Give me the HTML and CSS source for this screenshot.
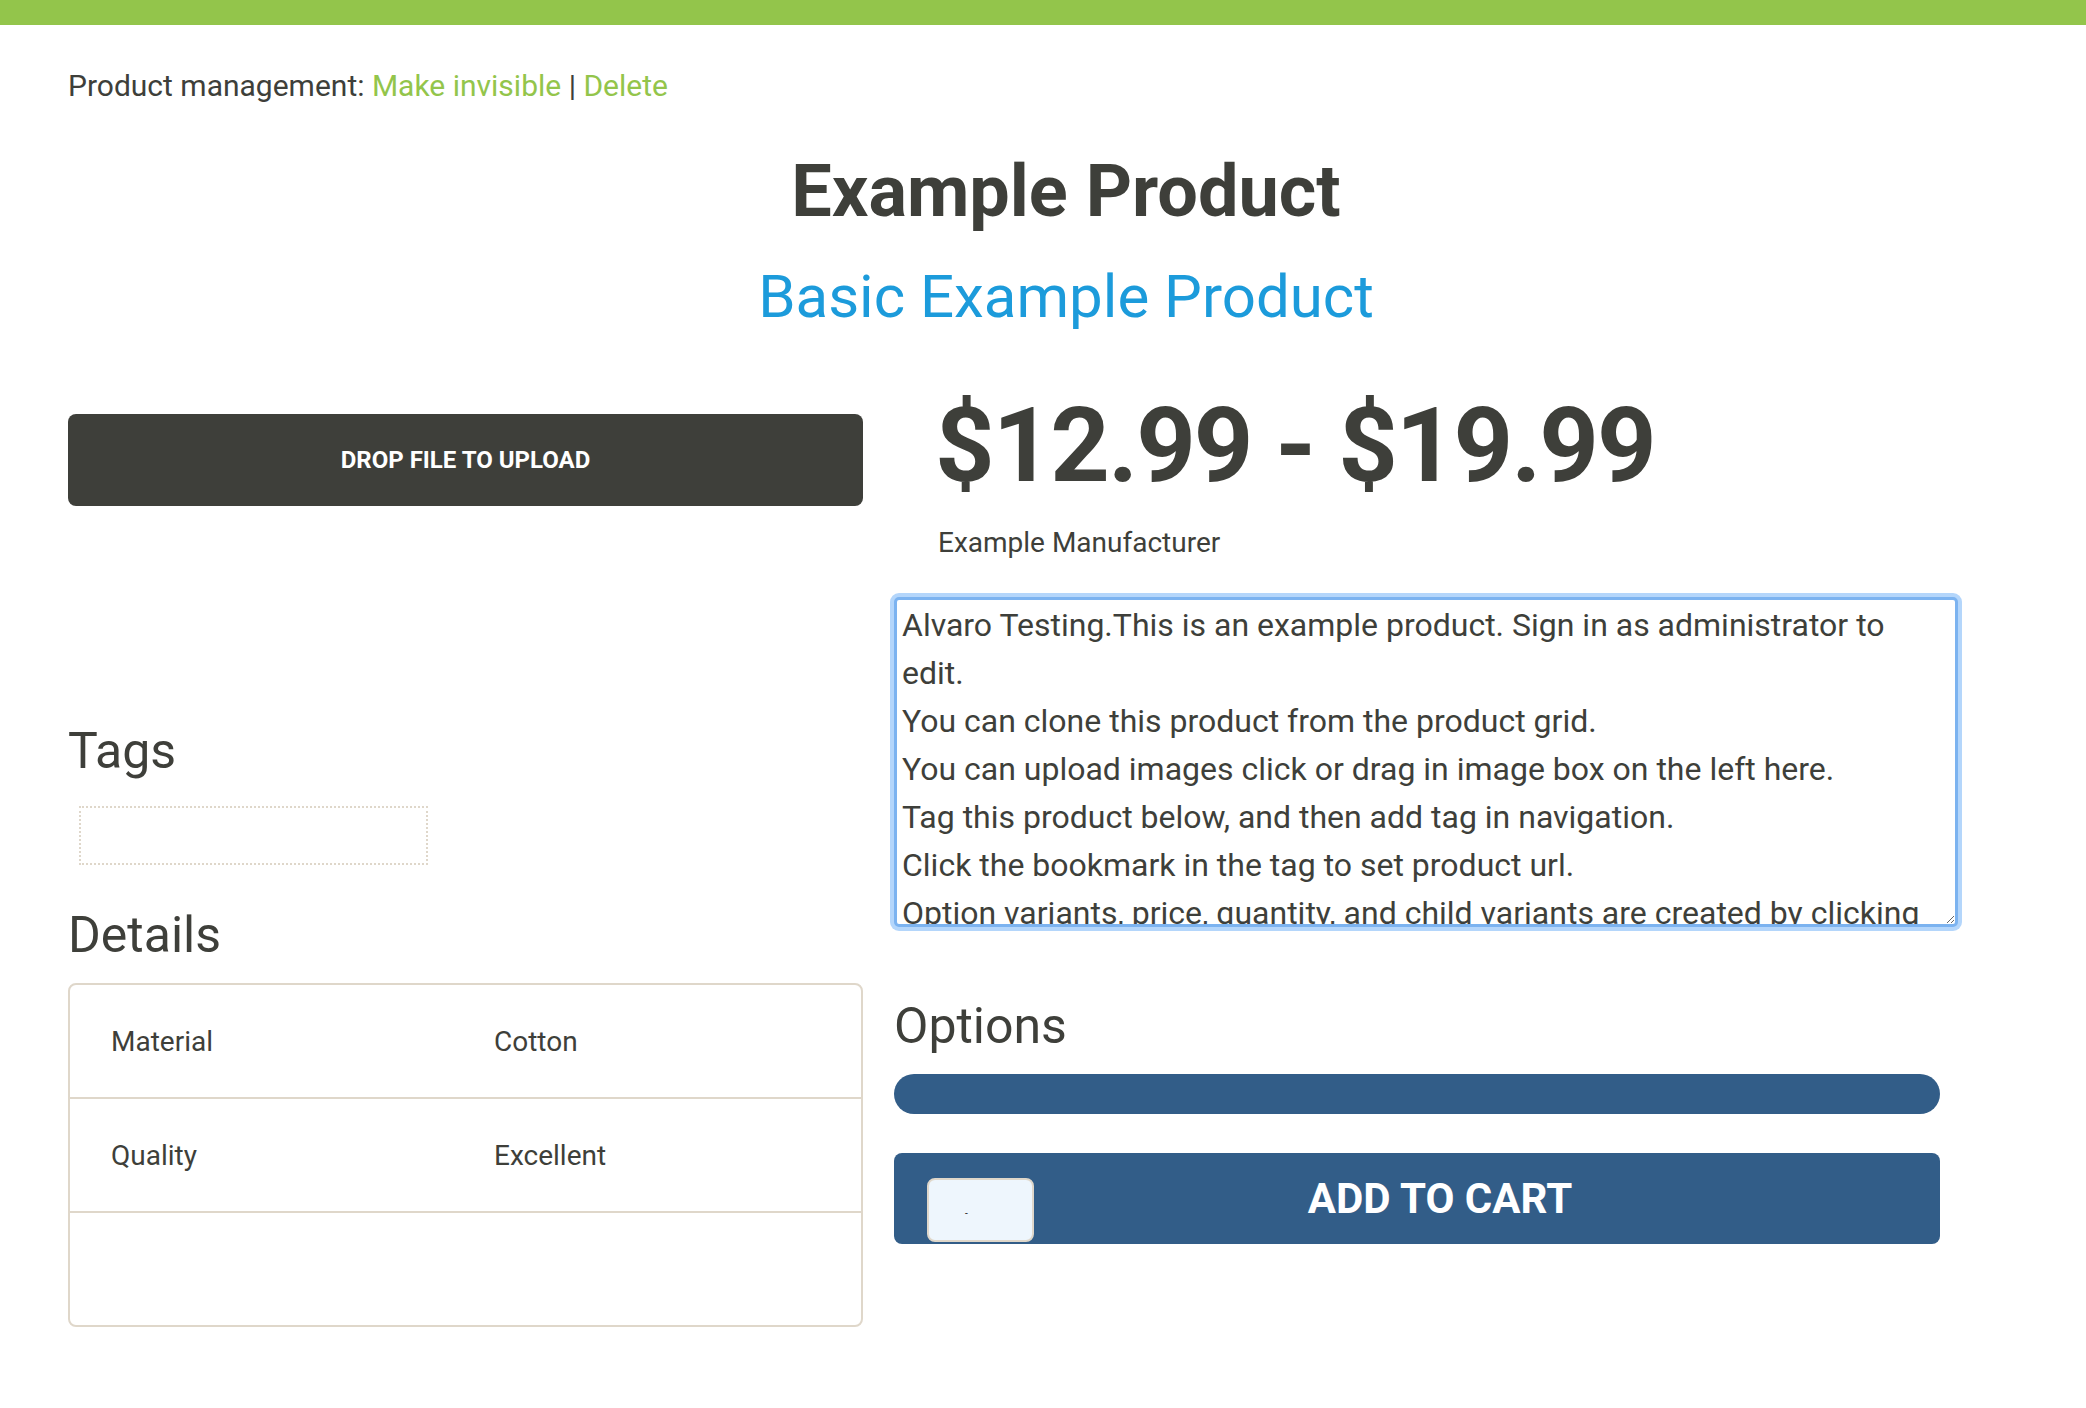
FILE: index.html
```html
<!DOCTYPE html>
<html lang="en">
<head>
<meta charset="utf-8">
<title>Example Product</title>
<link rel="stylesheet" href="styles.css">
</head>
<body>
<div class="topbar"></div>
<div class="page">
  <p class="mgmt">Product management: <a href="#" class="link">Make invisible</a> | <a href="#" class="link">Delete</a></p>
  <h1 class="title">Example Product</h1>
  <h2 class="subtitle">Basic Example Product</h2>
  <div class="row">
    <div class="col-left">
      <div class="drop">DROP FILE TO UPLOAD</div>
      <h3 class="section tags-h">Tags</h3>
      <div class="tagbox"></div>
      <h3 class="section details-h">Details</h3>
      <div class="details">
        <div class="drow"><span class="dcell">Material</span><span class="dcell">Cotton</span></div>
        <div class="drow"><span class="dcell">Quality</span><span class="dcell">Excellent</span></div>
        <div class="drow drow-last"></div>
      </div>
    </div>
    <div class="col-right">
      <div class="price">$12.99 - $19.99</div>
      <div class="mfr">Example Manufacturer</div>
      <textarea class="desc">Alvaro Testing.This is an example product. Sign in as administrator to edit.
You can clone this product from the product grid.
You can upload images click or drag in image box on the left here.
Tag this product below, and then add tag in navigation.
Click the bookmark in the tag to set product url.
Option variants, price, quantity, and child variants are created by clicking on the options tab.</textarea>
      <h3 class="section options-h">Options</h3>
      <div class="optbar"></div>
      <div class="cart">
        <span class="qty"><span class="qty-mark">-</span></span>
        <span class="cart-label">ADD TO CART</span>
      </div>
    </div>
  </div>
</div>
</body>
</html>
```

FILE: styles.css
```css
html, body {
  margin: 0;
  padding: 0;
  background: #ffffff;
}

body {
  font-family: "Roboto", "Liberation Sans", sans-serif;
  color: #3e3f3a;
}

.topbar {
  height: 25px;
  background: #93c54b;
}

.page {
  padding: 0 22px 0 68px;
}

.mgmt {
  margin: 41px 0 0;
  font-size: 30px;
  line-height: 40px;
}

.link {
  color: #93c54b;
  text-decoration: none;
}

.title {
  margin: 46px 0 0;
  text-align: center;
  font-size: 72px;
  line-height: 80px;
  font-weight: 700;
  color: #3e3f3a;
}

.subtitle {
  margin: 32px 0 0;
  text-align: center;
  font-size: 60px;
  line-height: 66px;
  font-weight: 400;
  color: #1c9bdb;
}

.row {
  display: flex;
  gap: 31px;
  align-items: flex-start;
}

.col-left {
  width: 795px;
  flex: none;
  display: flex;
  flex-direction: column;
}

.col-right {
  flex: 1;
  display: flex;
  flex-direction: column;
}

.drop {
  margin-top: 84px;
  height: 92px;
  line-height: 92px;
  background: #3e3f3a;
  border-radius: 8px;
  color: #ffffff;
  text-align: center;
  font-size: 24px;
  font-weight: 700;
}

.section {
  margin: 0;
  font-size: 50px;
  line-height: 56px;
  font-weight: 400;
  color: #3e3f3a;
}

.tags-h {
  margin-top: 217px;
}

.tagbox {
  margin: 27px 0 0 11px;
  width: 349px;
  height: 59px;
  box-sizing: border-box;
  border: 2px dotted #dfd7ca;
}

.details-h {
  margin-top: 42px;
}

.details {
  margin-top: 20px;
  border: 2px solid #dfd7ca;
  border-radius: 8px;
}

.drow {
  display: grid;
  grid-template-columns: 383px 1fr;
  align-items: center;
  height: 112px;
  border-bottom: 2px solid #dfd7ca;
  font-size: 28px;
}

.drow-last {
  border-bottom: none;
  height: 112px;
}

.dcell {
  padding-left: 41px;
}

.price {
  margin-top: 59px;
  padding-left: 41px;
  font-size: 104px;
  line-height: 114px;
  font-weight: 700;
  letter-spacing: -2px;
}

.mfr {
  margin-top: 22px;
  padding-left: 44px;
  font-size: 28px;
  line-height: 36px;
}

.desc {
  display: block;
  margin: 36px 0 0 0;
  width: 1064px;
  height: 330px;
  box-sizing: border-box;
  padding: 1px 5px;
  border: 3px solid #7cb3f0;
  border-radius: 5px;
  box-shadow: 0 0 0 4px #b4d6fb;
  outline: none;
  font-family: "Roboto", "Liberation Sans", sans-serif;
  font-size: 32px;
  line-height: 48px;
  color: #3e3f3a;
  background: #ffffff;
  overflow: hidden;
}

.options-h {
  margin-top: 71px;
}

.optbar {
  margin-top: 20px;
  width: 1046px;
  height: 40px;
  border-radius: 20px;
  background: #325d88;
}

.cart {
  margin-top: 39px;
  width: 1046px;
  height: 91px;
  box-sizing: border-box;
  border-radius: 8px;
  background: #325d88;
  display: flex;
  align-items: center;
}

.qty {
  margin-left: 33px;
  align-self: flex-end;
  margin-bottom: 2px;
  width: 107px;
  height: 64px;
  box-sizing: border-box;
  border: 2px solid #dfd7ca;
  border-radius: 8px;
  background: #eef6fd;
  display: flex;
  align-items: center;
  padding-left: 36px;
}

.qty-mark {
  font-size: 10px;
  line-height: 10px;
  color: #222222;
  margin-top: 8px;
}

.cart-label {
  flex: 1;
  padding-right: 94px;
  text-align: center;
  color: #ffffff;
  font-size: 42px;
  font-weight: 700;
}
```
